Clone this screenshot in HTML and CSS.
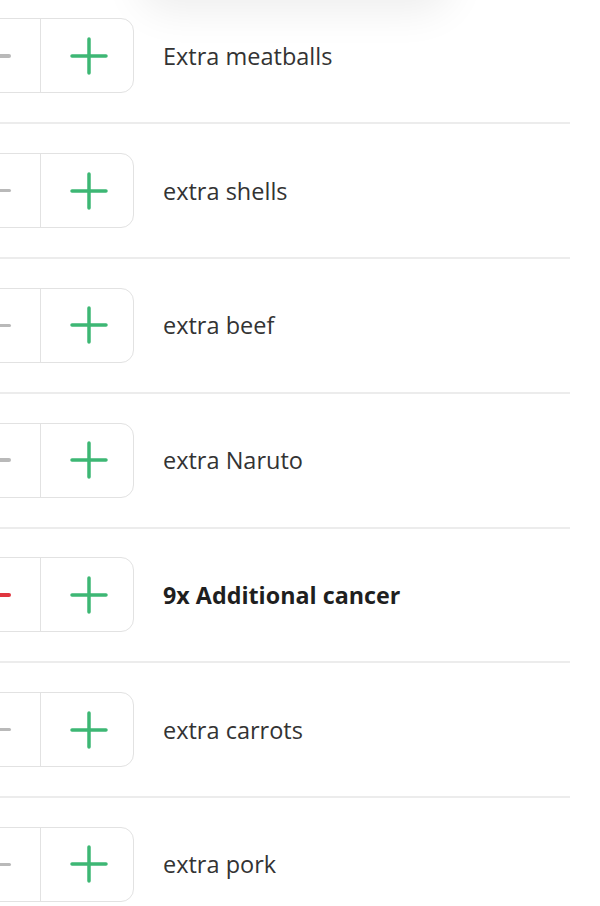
FILE: index.html
```html
<!DOCTYPE html>
<html>
<head>
<meta charset="utf-8">
<link rel="stylesheet" href="styles.css">
</head>
<body>
<div class="page">
  <div class="shade"></div>
  <ul class="list">
    <li class="row">
      <div class="stepper">
        <button class="step minus"><span class="bar"></span></button>
        <button class="step plus"><svg viewBox="0 0 38 38" width="38" height="38"><path d="M19 2V36M2 19H36"/></svg></button>
      </div>
      <span class="label">Extra meatballs</span>
    </li>
    <li class="row">
      <div class="stepper">
        <button class="step minus"><span class="bar"></span></button>
        <button class="step plus"><svg viewBox="0 0 38 38" width="38" height="38"><path d="M19 2V36M2 19H36"/></svg></button>
      </div>
      <span class="label">extra shells</span>
    </li>
    <li class="row">
      <div class="stepper">
        <button class="step minus"><span class="bar"></span></button>
        <button class="step plus"><svg viewBox="0 0 38 38" width="38" height="38"><path d="M19 2V36M2 19H36"/></svg></button>
      </div>
      <span class="label">extra beef</span>
    </li>
    <li class="row">
      <div class="stepper">
        <button class="step minus"><span class="bar"></span></button>
        <button class="step plus"><svg viewBox="0 0 38 38" width="38" height="38"><path d="M19 2V36M2 19H36"/></svg></button>
      </div>
      <span class="label">extra Naruto</span>
    </li>
    <li class="row selected">
      <div class="stepper">
        <button class="step minus"><span class="bar"></span></button>
        <button class="step plus"><svg viewBox="0 0 38 38" width="38" height="38"><path d="M19 2V36M2 19H36"/></svg></button>
      </div>
      <span class="label">9x Additional cancer</span>
    </li>
    <li class="row">
      <div class="stepper">
        <button class="step minus"><span class="bar"></span></button>
        <button class="step plus"><svg viewBox="0 0 38 38" width="38" height="38"><path d="M19 2V36M2 19H36"/></svg></button>
      </div>
      <span class="label">extra carrots</span>
    </li>
    <li class="row">
      <div class="stepper">
        <button class="step minus"><span class="bar"></span></button>
        <button class="step plus"><svg viewBox="0 0 38 38" width="38" height="38"><path d="M19 2V36M2 19H36"/></svg></button>
      </div>
      <span class="label">extra pork</span>
    </li>
  </ul>
</div>
</body>
</html>
```
FILE: styles.css
```css
html, body {
  margin: 0;
  padding: 0;
  background: #ffffff;
  overflow: hidden;
}
.page {
  position: relative;
  width: 600px;
  height: 906px;
  overflow: hidden;
  font-family: "Open Sans", "Noto Sans", sans-serif;
}
.shade {
  position: absolute;
  top: -50px;
  left: 150px;
  width: 290px;
  height: 50px;
  border-radius: 20px;
  background: #e4e4e4;
  box-shadow: 0 0 40px 12px rgba(0,0,0,0.07);
}
.list {
  list-style: none;
  margin: -10.5px 0 0 -53px;
  padding: 0;
  width: 623px;
}
.row {
  display: flex;
  align-items: center;
  gap: 29px;
  height: 132.75px;
  border-bottom: 2px solid #ececec;
}
.stepper {
  display: flex;
  height: 73px;
  border: 1px solid #e2e2e2;
  border-radius: 13px;
  background: #fff;
  overflow: hidden;
}
.step {
  width: 92px;
  height: 100%;
  border: 0;
  padding: 0;
  margin: 0;
  background: transparent;
  display: flex;
  align-items: center;
  justify-content: center;
}
.minus {
  width: 93px;
  border-right: 1px solid #e2e2e2;
  padding-right: 4px;
}
.plus {
  padding-left: 4px;
}
.bar {
  display: block;
  width: 38px;
  height: 3.5px;
  border-radius: 2px;
  background: #b9b9b9;
}
.selected .bar {
  background: #e0363f;
}
.plus svg {
  display: block;
}
.plus path {
  stroke: #3db774;
  stroke-width: 3.5;
  stroke-linecap: round;
  fill: none;
}
.label {
  font-size: 23.5px;
  color: #333;
}
.selected .label {
  font-weight: 700;
  color: #1f1f1f;
  font-size: 23.3px;
}
```
